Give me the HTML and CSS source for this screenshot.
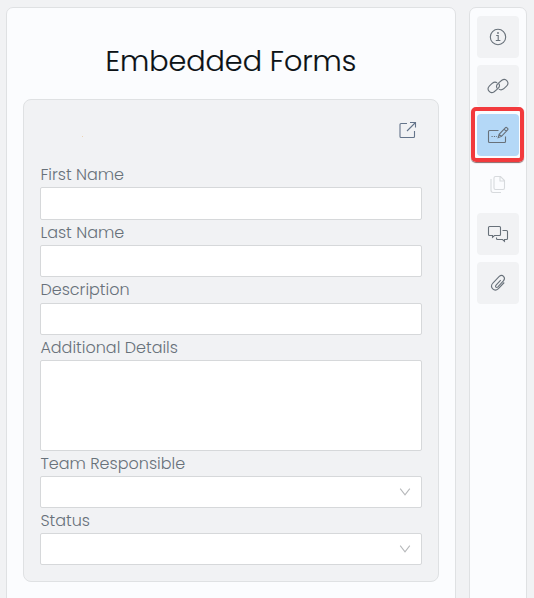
FILE: index.html
```html
<!DOCTYPE html>
<html lang="en">
<head>
<meta charset="utf-8">
<title>Embedded Forms</title>
<link rel="stylesheet" href="styles.css">
</head>
<body>
<main class="panel">
  <h1 class="title">Embedded Forms</h1>
  <form class="card">
    <div class="card-head">
      <i class="speck"></i>
      <svg class="open" width="20" height="20" viewBox="0 0 20 20"><path d="M9 3.5H3Q2 3.5 2 4.5V16.5Q2 17.5 3 17.5H15.5Q16.5 17.5 16.5 16.5V11M12 2.5H17.5V7.5M17.5 2.5L9 11"/></svg>
    </div>
    <label class="label">First Name</label><div class="field first"></div>
    <label class="label">Last Name</label><div class="field"></div>
    <label class="label tall">Description</label><div class="field"></div>
    <label class="label">Additional Details</label><div class="field area"></div>
    <label class="label">Team Responsible</label>
    <div class="field select"><svg width="12" height="10" viewBox="0 0 12 10"><path d="M1.2 1.6L6 7.8L10.8 1.6"/></svg></div>
    <label class="label">Status</label>
    <div class="field select"><svg width="12" height="10" viewBox="0 0 12 10"><path d="M1.2 1.6L6 7.8L10.8 1.6"/></svg></div>
  </form>
</main>
<nav class="rail">
  <div class="tool"><svg width="22" height="22" viewBox="0 0 22 22"><circle cx="11" cy="11" r="7.7"/><path d="M9.2 9.5H11.2V14.5M8.8 14.5H13.4"/><circle class="dot" cx="11" cy="7" r=".9"/></svg></div>
  <div class="tool"><svg width="22" height="22" viewBox="0 0 22 22"><path d="M10.2 7.9C8.7 6.9 6.8 7.1 5.4 8.2L2.5 10.8C-1.1 14.4 3.2 19.6 7.2 16.7L10.6 13.8C12.6 12.2 12.9 10 11.6 8.3"/><path d="M11.8 14.1C13.3 15.1 15.2 14.9 16.6 13.8L19.5 11.2C23.1 7.6 18.8 2.4 14.8 5.3L11.4 8.2C9.4 9.8 9.1 12 10.4 13.7"/></svg></div>
  <div class="tool active"><svg width="22" height="22" viewBox="0 0 22 22"><path d="M11.5 6.5H2.5Q1.5 6.5 1.5 7.5V17.5Q1.5 18.5 2.5 18.5H17.5Q18.5 18.5 18.5 17.5V12.5"/><path d="M11.2 13.7L12.1 10.3L18.3 3.8Q19.1 3 20 3.8L20.6 4.4Q21.3 5.2 20.6 6L14.5 12.4ZM17 5.2L19.3 7.4M12.1 10.3L14.5 12.4"/><path class="dots" d="M4.5 12.5H10"/></svg><span class="highlight"></span></div>
  <div class="tool disabled"><svg width="22" height="22" viewBox="0 0 22 22"><path d="M8.5 2.5H13.5L17.5 6.5V14Q17.5 15.5 16 15.5H8.5Q7 15.5 7 14V4Q7 2.5 8.5 2.5ZM13 2.5V7H17.5M4 5V16Q4 18.5 6 18.5H14"/></svg></div>
  <div class="tool"><svg width="22" height="22" viewBox="0 0 22 22"><path d="M2.5 3.5H12.5Q13.5 3.5 13.5 4.5V11.5Q13.5 12.5 12.5 12.5H7.5L5.5 14.3V12.5H2.5Q1.5 12.5 1.5 11.5V4.5Q1.5 3.5 2.5 3.5Z"/><path d="M15.5 7.5H19.5Q20.5 7.5 20.5 8.5V15.5Q20.5 16.5 19.5 16.5H17.5V18.3L15.5 16.5H10.5Q9.5 16.5 9.5 15.5V14.5"/></svg></div>
  <div class="tool"><svg width="22" height="22" viewBox="0 0 22 22"><path d="M13.7 8.2L9.1 13.1C7.6 14.9 9.4 16.2 10.9 14.8L16.4 9C19.2 5.6 15.5 1.6 12 4.6L5.9 11C2.2 15.2 7.3 20.4 11.4 16.6L17.2 10.5"/></svg></div>
</nav>
</body>
</html>
```

FILE: styles.css
```css
* { box-sizing: border-box; }
body {
  margin: 0;
  height: 598px;
  overflow: hidden;
  padding: 7px 7px 0 6px;
  display: flex;
  justify-content: space-between;
  background: #f1f2f4;
  font-family: Poppins, Inter, sans-serif;
}
svg { display: block; fill: none; stroke: #68717a; stroke-width: 1.1; }
.panel, .rail {
  height: 620px;
  background: #fbfcfe;
  border: 1px solid #dfe1e3;
  border-radius: 7px;
}
.panel { width: 450px; padding: 0 16px; }
.title {
  margin: 0;
  height: 91px;
  padding-top: 31px;
  font-size: 28.6px;
  line-height: 44px;
  font-weight: 300;
  text-align: center;
  white-space: nowrap;
  color: #0b1115;
  -webkit-text-stroke: 0.2px #0b1115;
}
.card {
  height: 483px;
  padding: 0 16px;
  background: #f1f2f4;
  border: 1px solid #dfe1e3;
  border-radius: 8px;
}
.card-head {
  height: 62px;
  padding: 20px 4px 0 42px;
  display: flex;
  justify-content: space-between;
}
.open { stroke: #64748a; }
.speck { width: 1px; height: 1px; margin-top: 16px; background: #edd3b4; }
.label {
  display: block;
  height: 25px;
  padding-left: 0.4px;
  line-height: 26px;
  font-size: 16px;
  font-weight: 300;
  white-space: nowrap;
  color: #68717a;
}
.label.tall { height: 26px; }
.field {
  height: 32px;
  background: #fff;
  border: 1px solid #d6d8da;
  border-radius: 2px;
}
.field.first { height: 33px; }
.field.area { height: 91px; }
.select {
  display: flex;
  align-items: center;
  justify-content: flex-end;
  padding-right: 10px;
}
.select svg { stroke: #b7b9bb; }
.rail {
  width: 58px;
  padding-top: 8px;
  display: flex;
  flex-direction: column;
  align-items: center;
  gap: 7.2px;
}
.tool {
  position: relative;
  width: 42px;
  height: 42px;
  flex: none;
  display: flex;
  align-items: center;
  justify-content: center;
  border-radius: 4px;
  background: #f1f2f4;
}
.dot { fill: #68717a; stroke: none; }
.dots { stroke-dasharray: 1.2 1.2; }
.active { background: #b4d8f7; }
.disabled { background: none; }
.disabled svg { stroke: #d7dadd; }
.highlight {
  position: absolute;
  left: -6px;
  top: -7px;
  width: 53px;
  height: 55px;
  border: 4px solid #f23a3d;
  border-radius: 5px;
  box-shadow: 0 1px 1px #8b6668;
}
```
